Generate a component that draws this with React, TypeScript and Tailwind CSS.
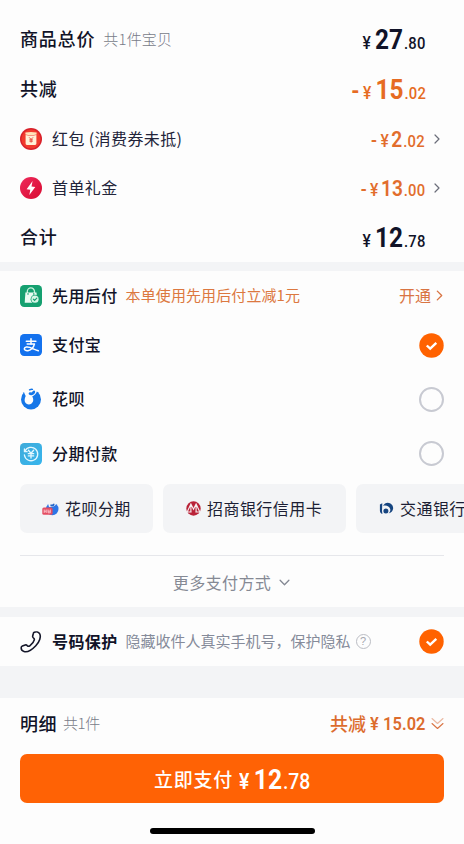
import type { ReactNode } from "react";

const DARK = "text-[#111328]";

function Price({ minus, whole, cents, big, tone }: { minus?: string; whole: string; cents: string; big?: boolean; tone: string }) {
  return (
    <div className={`mt-0.5 flex origin-right scale-x-[0.87] items-baseline whitespace-nowrap font-[Roboto,sans-serif] leading-none ${tone}`}>
      {minus && <span className={big ? "mr-[4px] text-[24px] font-bold" : "mr-[4px] text-[20px] font-medium"}>{minus}</span>}
      <span className={big ? "mr-[5px] text-[18px] font-medium" : "mr-[3px] text-[18px] font-medium"}>¥</span>
      <span className={big ? "text-[28px] font-bold" : "text-[22px] font-semibold"}>{whole}</span>
      <span className="ml-[1px] text-[17px] font-medium tracking-[0.3px]">.{cents}</span>
    </div>
  );
}

function Chevron({ className }: { className: string }) {
  return (
    <svg viewBox="0 0 6 10" className={className} fill="none" stroke="currentColor" strokeWidth="1.2" strokeLinecap="round" strokeLinejoin="round">
      <path d="M1 1l4 4-4 4" />
    </svg>
  );
}

function Checked() {
  return (
    <svg viewBox="0 0 25 25" className="size-[25px] shrink-0">
      <circle cx="12.5" cy="12.5" r="12.2" fill="#ff6200" />
      <path d="M7.8 12.5l3.4 3.2 6.1-5.8" fill="none" stroke="#fff" strokeWidth="2.4" />
    </svg>
  );
}

function Unchecked() {
  return <span className="size-[25px] shrink-0 rounded-full border-2 border-[#c8cad2]" />;
}

function RedPacketIcon() {
  return (
    <svg viewBox="0 0 22 22" className="size-[22px]">
      <circle cx="11" cy="11" r="11" fill="#d8202a" />
      <circle cx="11" cy="11" r="9.6" fill="#f13a2d" />
      <path d="M5.4 4.4q5.6-.8 11.200 0v2q-5.600 1.300-11.200 0z" fill="#ffe3ba" />
      <path d="M5.600 7q5.200 1.100 10.800 0v8.600q0 1.300-1.300 1.300H6.900q-1.300 0-1.300-1.300z" fill="#fff0d7" />
      <path d="M9.200 9.400l1.900 2 1.900-2M11.100 11.400v3.200M9.400 11.800h3.400M9.400 13.200h3.400" stroke="#e64235" strokeWidth=".9" fill="none" />
    </svg>
  );
}

function BoltIcon() {
  return (
    <svg viewBox="0 0 22 22" className="size-[22px]">
      <defs>
        <linearGradient id="bolt" x1="0" y1="0" x2="1" y2="1">
          <stop stopColor="#ee2a5c" />
          <stop offset="1" stopColor="#d80b31" />
        </linearGradient>
      </defs>
      <circle cx="11" cy="11" r="11" fill="url(#bolt)" />
      <path d="M12.6 4L6.6 12.3l3.7.4-1 5.3 6-8-3.8-.5z" fill="#fff" />
    </svg>
  );
}

function PayLaterIcon() {
  return (
    <svg viewBox="0 0 22 22" className="size-[22px]">
      <rect width="22" height="22" rx="4.2" fill="#15a070" />
      <path d="M7.3 8V6.5a3.6 3.6 0 017.2 0V8" fill="none" stroke="#c8f2dd" strokeWidth="1.3" />
      <path d="M5.4 7.5h11.1l.7 10.2H4.7z" fill="#e9fbf2" />
      <path d="M8 8.4v1.1M13.8 8.4v1.1" stroke="#15a070" strokeWidth="1" strokeLinecap="round" />
      <circle cx="15" cy="14.2" r="4.4" fill="#15a070" />
      <circle cx="15" cy="14.2" r="3.6" fill="#d8f6e7" />
      <path d="M13.3 14.1l1.3 1.3 2.2-2.3" fill="none" stroke="#15a070" strokeWidth="1.1" strokeLinecap="round" />
    </svg>
  );
}

function AlipayIcon() {
  return (
    <svg viewBox="0 0 22 22" className="size-[22px]">
      <rect width="22" height="22" rx="4.2" fill="#1472ee" />
      <g fill="none" stroke="#fff" strokeLinecap="round">
        <path d="M6.300 7.200h9.600M11 4.800v5.200" strokeWidth="1.5" />
        <path d="M7.200 9.900h7.300c-.8 3.200-3.200 6.300-6.500 6.800-2.400.3-3.900-.8-3.600-2.200.4-1.800 3.100-1.900 5.400-1.100 2.700 1 5 2.400 8.500 3.300" strokeWidth="1.500" strokeLinejoin="round" />
      </g>
    </svg>
  );
}

function HuabeiIcon() {
  return (
    <svg viewBox="0 0 22 22" className="size-[22px]">
      <circle cx="11" cy="11.400" r="10" fill="#1677e8" />
      <path d="M3.800 3.600L6.500-.5h9.300l1.300 3.300c-.7 3-2.600 4.500-4.900 5.700 1.700 2.500 1.300 5.600-.9 7.200-2.300 1.600-5.300.7-6.300-1.700-.8-2.100-.2-4 .7-5.900C4.900 6.600 4.200 5 3.800 3.600z" fill="#fdfdfd" />
      <path d="M8.800 5c.6-1.300 1.600-.4 2.600-.6 1-.2 1.300-1.600 2.300-1.900 1.300-.3 1.800 1.100 1.300 2.300-.8 1.900-3 2.900-4.800 2.300C8.900 6.700 8.400 5.900 8.800 5z" fill="#1677e8" />
      <path d="M9.500 1.900q1.500-.8 3-.6" stroke="#1677e8" strokeWidth="1.300" strokeLinecap="round" fill="none" />
    </svg>
  );
}

function InstallmentIcon() {
  return (
    <svg viewBox="0 0 22 22" className="size-[22px]">
      <defs>
        <linearGradient id="inst" x1="0" y1="0" x2="1" y2="1">
          <stop stopColor="#3fabda" />
          <stop offset="1" stopColor="#37b5ed" />
        </linearGradient>
      </defs>
      <rect width="22" height="22" rx="4.2" fill="url(#inst)" />
      <g fill="none" stroke="#e4f8ff" strokeLinecap="round" strokeLinejoin="round">
        <path d="M5 8.100A6.700 6.700 0 1 1 4.400 12" strokeWidth="1.300" />
        <path d="M4.400 5.900v2.800h2.800" strokeWidth="1.200" />
        <path d="M8.400 7.200l2.600 3 2.600-3M11 10.200v4.900M8.300 10.700h5.400M8.300 12.900h5.400" strokeWidth="1.300" />
      </g>
    </svg>
  );
}

function HuabeiSmallIcon() {
  return (
    <svg viewBox="0 0 17 14" className="h-[14px] w-[17px]">
      <circle cx="10.300" cy="7" r="6.200" fill="#2c75e6" />
      <path d="M6 1.500L8.500 0h4.700l1 1.800c-.5 1.600-1.700 2.300-2.900 2.700L7 5z" fill="#f3f4f6" />
      <path d="M8.300 2.800c.7-.7 1.300 0 2-.3.700-.3.900-1.200 1.700-1.100 1 .2.700 1.800-.3 2.500-1.300.9-3.800.4-3.400-1.100z" fill="#2364c8" />
      <rect x=".3" y="5.500" width="10.300" height="7.300" rx="1.600" fill="#e44c62" />
      <path d="M2.200 7.500v3.500M2.200 9.200h2M4.200 7.500v3.500M6 7.500v3.300h2.300V7.500M6 9.200h2.200" stroke="#ffd5da" strokeWidth=".8" fill="none" />
    </svg>
  );
}

function CmbIcon() {
  return (
    <svg viewBox="0 0 15 15" className="size-[15px]">
      <circle cx="7.500" cy="7.500" r="7.200" fill="#b92238" />
      <path d="M1.400 10.500L4.900 3l2.600 5.200L10.100 3l3.500 7.500M4.900 4v6.500M10.100 4v6.500M1 11h4.600M9.400 11H14" stroke="#f6f0f2" strokeWidth="1.100" fill="none" />
    </svg>
  );
}

function BocomIcon() {
  return (
    <svg viewBox="0 0 15 13" className="h-[13px] w-[15px]">
      <path d="M3.300 1.200L.9 2.600v5.800c0 1.700.9 2.900 2.500 3.600L3 8.800z" fill="#164580" />
      <path d="M3.900 3.900C5.400 1.100 8.400-.2 11 1.200c3 1.500 4 5 2.400 7.500-.9 1.500-2.300 2.300-3.900 2.700 1.400-1.200 2.100-2.700 1.700-4.300C10.500 4.200 7.100 3 3.900 3.900z" fill="#164580" />
      <circle cx="6.900" cy="8.900" r="2.500" fill="#164580" />
    </svg>
  );
}

function PhoneIcon() {
  return (
    <svg viewBox="0 0 22 22" className="size-[22px]" fill="none" stroke="#15172a" strokeWidth="1.600" strokeLinejoin="round">
      <path d="M14.300 1.300c1.700-.8 4.300-.2 5.300 1.400 1.800 3-.2 8.200-3.800 12-3.500 3.700-8.600 6.700-11.800 5.800-1.700-.5-2.900-2.200-2.800-3.800 0-.8.500-1.300 1.200-1.600l2.800-1.100c.9-.3 1.400-.1 2 .6.800.8 1.700.9 2.600.2 1.900-1.500 4.100-4.200 4.500-6 .2-.9-.1-1.400-.9-1.900-.7-.5-.9-1-.7-1.900l.6-2.500c.1-.6.400-.9 1-1.200z" />
    </svg>
  );
}

function TotalRow({ label, note, className, children }: { label: string; note?: string; className: string; children: ReactNode }) {
  return (
    <div className={`flex items-center pr-[38px] pl-5 ${className}`}>
      <span className={`mb-0.5 text-[18px] font-medium tracking-[0.8px] ${DARK}`}>{label}</span>
      {note && <span className="mb-0.5 ml-2 text-[15px] font-light tracking-[0.2px] text-[#777b88]">{note}</span>}
      <div className="ml-auto">{children}</div>
    </div>
  );
}

function DiscountRow({ icon, label, whole, cents }: { icon: ReactNode; label: string; whole: string; cents: string }) {
  return (
    <div className="flex h-[49px] items-center pr-6 pl-5">
      {icon}
      <span className="mb-0.5 ml-2.5 text-[16px] tracking-[0.4px] text-[#22243a]">{label}</span>
      <div className="ml-auto">
        <Price minus="-" whole={whole} cents={cents} tone="text-[#e26d2c]" />
      </div>
      <Chevron className="ml-[9px] h-[10px] w-[6px] text-[#6b6e7a]" />
    </div>
  );
}

function PayRow({ icon, label, className, children }: { icon: ReactNode; label: string; className: string; children: ReactNode }) {
  return (
    <div className={`flex items-center px-5 ${className}`}>
      {icon}
      <span className={`mb-0.5 ml-2.5 text-[16px] font-medium tracking-[0.4px] ${DARK}`}>{label}</span>
      {children}
    </div>
  );
}

function Chip({ icon, label, className }: { icon: ReactNode; label: string; className: string }) {
  return (
    <div className={`flex h-[49px] shrink-0 items-center rounded-[7px] bg-[#f3f4f6] text-[16px] tracking-[0.45px] text-[#1c1e34] ${className}`}>
      {icon}
      <span className="mb-0.5 ml-1.5 whitespace-nowrap">{label}</span>
    </div>
  );
}

export default function App() {
  return (
    <main className="flex h-[844px] w-[464px] flex-col overflow-hidden bg-[#fdfdfd] font-['Noto_Sans_CJK_SC',sans-serif] leading-none whitespace-nowrap">
      <section className="h-[262px] shrink-0 pt-[14px]">
        <TotalRow label="商品总价" note="共1件宝贝" className="h-[50px]">
          <Price whole="27" cents="80" big tone={DARK} />
        </TotalRow>
        <TotalRow label="共减" className="h-[50px]">
          <Price minus="-" whole="15" cents="02" big tone="text-[#e66b22]" />
        </TotalRow>
        <DiscountRow icon={<RedPacketIcon />} label="红包 (消费券未抵)" whole="2" cents="02" />
        <DiscountRow icon={<BoltIcon />} label="首单礼金" whole="13" cents="00" />
        <TotalRow label="合计" className="h-[50px]">
          <Price whole="12" cents="78" big tone={DARK} />
        </TotalRow>
      </section>

      <div className="h-[9px] shrink-0 bg-[#f3f4f6]" />

      <section className="h-[336px] shrink-0">
        <PayRow icon={<PayLaterIcon />} label="先用后付" className="h-[49px]">
          <span className="mb-0.5 ml-2 text-[15px] tracking-[0.1px] text-[#dc7840]">本单使用先用后付立减1元</span>
          <span className="mb-0.5 ml-auto text-[16px] text-[#d97443]">开通</span>
          <Chevron className="mr-px ml-[5px] h-[11px] w-[7px] text-[#d97443]" />
        </PayRow>
        <PayRow icon={<AlipayIcon />} label="支付宝" className="h-[50px]">
          <div className="ml-auto flex"><Checked /></div>
        </PayRow>
        <PayRow icon={<HuabeiIcon />} label="花呗" className="h-[58px]">
          <div className="ml-auto flex"><Unchecked /></div>
        </PayRow>
        <PayRow icon={<InstallmentIcon />} label="分期付款" className="h-[51px]">
          <div className="ml-auto flex"><Unchecked /></div>
        </PayRow>
        <div className="flex gap-2.5 overflow-hidden pt-[5px] pl-5">
          <Chip icon={<HuabeiSmallIcon />} label="花呗分期" className="w-[133px] pl-[22px]" />
          <Chip icon={<CmbIcon />} label="招商银行信用卡" className="w-[183px] pl-[23px]" />
          <Chip icon={<BocomIcon />} label="交通银行信用卡" className="w-[183px] pl-[23px]" />
        </div>
        <div className="mx-5 mt-[22px] flex h-[52px] items-center justify-center border-t border-[#e6e7eb] pt-px text-[16px] tracking-[0.4px] text-[#858994]">
          更多支付方式
          <Chevron className="mr-[3px] ml-[10px] h-[11px] w-[7px] rotate-90" />
        </div>
      </section>

      <div className="h-[10px] shrink-0 bg-[#f3f4f6]" />

      <section className="flex h-[49px] shrink-0 items-center px-5">
        <PhoneIcon />
        <span className={`mb-0.5 ml-2.5 text-[16px] font-bold tracking-[0.4px] ${DARK}`}>号码保护</span>
        <span className="mb-0.5 ml-2 text-[15px] text-[#858b9a]">隐藏收件人真实手机号，保护隐私</span>
        <span className="ml-[5px] flex size-[15px] items-center justify-center rounded-full border border-[#bbbdc4] font-['Liberation_Sans',sans-serif] text-[11px] text-[#a5a7af]">?</span>
        <div className="ml-auto flex"><Checked /></div>
      </section>

      <div className="h-8 shrink-0 bg-[#f3f4f6]" />

      <footer className="flex flex-1 flex-col px-5">
        <div className="flex h-14 items-center pb-[6px]">
          <span className={`mb-px text-[18px] font-medium tracking-[0.5px] ${DARK}`}>明细</span>
          <span className="mb-0.5 ml-1.5 text-[15px] font-light tracking-[-0.4px] text-[#777b88]">共1件</span>
          <div className="ml-auto flex items-center text-[#dc6c2d]">
            <span className="text-[18px] font-medium">共减</span>
            <span className="mt-0.5 -mr-[5px] ml-[4px] origin-left scale-x-[0.91] font-[Roboto,sans-serif] text-[18px] font-semibold tracking-[0.1px]">¥ 15.02</span>
          </div>
          <svg viewBox="0 0 13 13" className="ml-[5px] size-[13px]" fill="none" stroke="#d97443" strokeWidth="1.100" strokeLinecap="round" strokeLinejoin="round">
            <path d="M1 1.500l5.500 5 5.500-5" opacity=".5" />
            <path d="M1 6.500l5.500 5 5.500-5" />
          </svg>
        </div>
        <button className="flex h-[49px] items-center justify-center rounded-[7px] bg-[#ff6205] text-white">
          <span className="text-[19px] font-medium tracking-[0.8px]">立即支付</span>
          <span className="mt-0.5 -mr-[10px] ml-[6px] flex origin-left scale-x-[0.88] items-baseline font-[Roboto,sans-serif] leading-none">
            <span className="mr-[5px] text-[22px] font-semibold">¥</span>
            <span className="text-[28px] font-bold">12</span>
            <span className="ml-px text-[22px] font-medium">.78</span>
          </span>
        </button>
        <div className="mx-auto mt-[25px] h-[6px] w-[165px] rounded-full bg-black" />
      </footer>
    </main>
  );
}
